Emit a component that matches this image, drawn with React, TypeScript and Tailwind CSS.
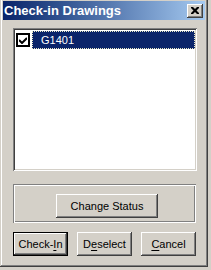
import React from "react";

const raised =
  "shadow-[inset_-1px_-1px_#404040,inset_1px_1px_#ffffff,inset_-2px_-2px_#808080,inset_2px_2px_#d4d0c8]";

function Btn({
  children,
  w,
  def,
}: {
  children: React.ReactNode;
  w: string;
  def?: boolean;
}) {
  if (def) {
    return (
      <div className={`${w} h-[24px] border border-black bg-[#d4d0c8]`}>
        <div
          className={`w-full h-full flex items-center justify-center ${raised} text-black`}
        >
          {children}
        </div>
      </div>
    );
  }
  return (
    <div
      className={`${w} h-[24px] flex items-center justify-center bg-[#d4d0c8] ${raised} text-black`}
    >
      {children}
    </div>
  );
}

export default function App() {
  return (
    <div
      className="w-[211px] h-[270px] bg-[#d4d0c8] overflow-hidden text-[11px] leading-none"
      style={{ fontFamily: '"Liberation Sans", Arial, sans-serif' }}
    >
      <div className="w-[208px] h-[269px] -mt-[2px] p-[3px] bg-[#d4d0c8] shadow-[inset_-1px_-1px_#404040,inset_1px_1px_#d4d0c8,inset_-2px_-2px_#808080,inset_2px_2px_#ffffff] flex flex-col">
        {/* Title bar */}
        <div className="h-[19px] flex items-center justify-between bg-gradient-to-r from-[#0a246a] to-[#a6caf0] pl-[1px] pr-[2px]">
          <span className="text-white font-bold text-[13px]">
            Check-in Drawings
          </span>
          <div
            className={`w-[16px] h-[14px] bg-[#d4d0c8] ${raised} flex items-center justify-center`}
          >
            <svg width="8" height="7" viewBox="0 0 8 7">
              <path
                d="M0 0h2l2 2 2-2h2v1L5.5 3.5 8 6v1H6L4 5 2 7H0V6l2.5-2.5L0 1z"
                fill="#000"
              />
            </svg>
          </div>
        </div>

        {/* Body */}
        <div className="flex flex-col pl-[10px]">
          {/* List box */}
          <div className="mt-[8px] w-[184px] h-[143px] bg-white shadow-[inset_1px_1px_#808080,inset_-1px_-1px_#ffffff,inset_2px_2px_#404040,inset_-2px_-2px_#d4d0c8] p-[3px_2px_2px_3px]">
            <div className="flex items-center h-[18px]">
              <div className="w-[14px] h-[14px] border-2 border-black bg-white flex items-center justify-center">
                <svg width="8" height="7" viewBox="0 0 8 7">
                  <path
                    d="M0 3 L3 6 L8 1"
                    stroke="#000"
                    strokeWidth="2"
                    fill="none"
                  />
                </svg>
              </div>
              <div className="ml-[2px] w-[163px] h-[18px] bg-[#0a246a] border border-dotted border-[#e8e8c8] flex items-center pl-[8px] text-white">
                G1401
              </div>
            </div>
          </div>

          {/* Group box */}
          <div className="mt-[13px] w-[183px] h-[39px] shadow-[inset_1px_1px_#808080,inset_-1px_-1px_#ffffff,inset_2px_2px_#ffffff,inset_-2px_-2px_#808080] pl-[43px] pt-[10px]">
            <Btn w="w-[102px]">Change Status</Btn>
          </div>

          {/* Buttons */}
          <div className="mt-[9px] flex gap-[9px]">
            <Btn w="w-[55px]" def>
              <span>
                Check-<span className="underline underline-offset-2">I</span>n
              </span>
            </Btn>
            <Btn w="w-[55px]">
              <span>
                D<span className="underline underline-offset-2">e</span>select
              </span>
            </Btn>
            <Btn w="w-[55px]">
              <span>
                <span className="underline underline-offset-2">C</span>ancel
              </span>
            </Btn>
          </div>
        </div>
      </div>
    </div>
  );
}
